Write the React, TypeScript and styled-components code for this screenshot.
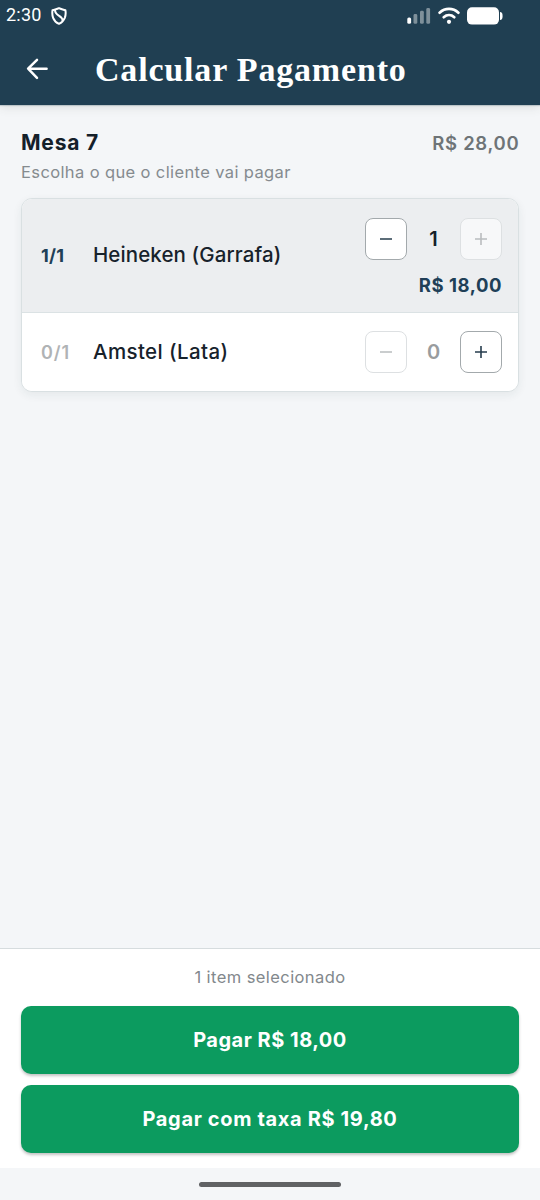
import React from "react";
import styled, { createGlobalStyle } from "styled-components";

const GlobalStyle = createGlobalStyle`
  * { box-sizing: border-box; }
  body { margin: 0; background: #f4f6f8; font-family: Inter, "Liberation Sans", sans-serif; }
  button { font: inherit; padding: 0; border: 0; }
`;

const Screen = styled.div`
  width: 540px;
  height: 1200px;
  display: flex;
  flex-direction: column;
  background: #f4f6f8;
  overflow: hidden;
`;

const TopBar = styled.header`
  height: 105px;
  flex: none;
  background: #203f52;
  color: #fff;
  box-shadow: 0 1px 1px rgba(32, 63, 82, 0.2), 0 2px 10px rgba(60, 60, 50, 0.13);
`;

const StatusBar = styled.div`
  height: 32px;
  padding: 0 37px 0 6px;
  display: flex;
  align-items: center;
  justify-content: space-between;
`;

const StatusGroup = styled.div`
  display: flex;
  align-items: center;
`;

const Clock = styled.span`
  font: 400 18px/30px Roboto, sans-serif;
  letter-spacing: 0.25px;
  padding-bottom: 2px;
  margin-right: 9px;
`;

const TitleRow = styled.div`
  height: 73px;
  display: flex;
  align-items: center;
  padding-left: 26px;
`;

const BackButton = styled.button`
  display: flex;
  width: 22px;
  height: 22px;
  margin-right: 47px;
  background: none;
  color: inherit;
`;

const Title = styled.h1`
  margin: 0;
  padding-top: 2px;
  font: 700 34px/44px "Liberation Serif", serif;
  letter-spacing: 0.82px;
  white-space: nowrap;
`;

const Content = styled.main`
  flex: 1;
  padding: 23px 21px 0;
`;

const Summary = styled.div`
  display: flex;
  justify-content: space-between;
  height: 30px;
  line-height: 30px;
  white-space: nowrap;
`;

const TableName = styled.h2`
  margin: 0;
  font-size: 21px;
  font-weight: 700;
  line-height: 30px;
  letter-spacing: 0.8px;
  color: #14202a;
`;

const Total = styled.span`
  font-size: 18.5px;
  font-weight: 600;
  line-height: 31px;
  letter-spacing: 0.7px;
  margin-right: -0.4px;
  color: #6e7477;
`;

const Hint = styled.p`
  margin: 0 0 10px;
  height: 31px;
  font-size: 16.5px;
  line-height: 29px;
  letter-spacing: 0.38px;
  color: #858b8f;
  white-space: nowrap;
`;

const Card = styled.section`
  margin-top: -1px;
  width: 498px;
  border: 1.5px solid #d9e0e2;
  border-radius: 11px;
  overflow: hidden;
  background: #fff;
  box-shadow: 0 3px 10px rgba(32, 50, 60, 0.07);
`;

const Row = styled.div<{ $selected?: boolean }>`
  display: flex;
  align-items: center;
  height: ${(p) => (p.$selected ? 114 : 78)}px;
  padding: 0 16px 0 19px;
  background: ${(p) => (p.$selected ? "#eceef0" : "#fff")};
  border-bottom: ${(p) => (p.$selected ? "1.5px solid #dbe2e4" : "0")};
`;

const Ratio = styled.span<{ $muted?: boolean }>`
  width: 52px;
  font-size: 18px;
  font-weight: ${(p) => (p.$muted ? 600 : 700)};
  letter-spacing: ${(p) => (p.$muted ? 0.9 : 0.3)}px;
  color: ${(p) => (p.$muted ? "#b0b3b5" : "#203f57")};
`;

const ItemName = styled.span<{ $spacing: number }>`
  flex: 1;
  padding-bottom: 2px;
  font-size: 20.5px;
  font-weight: 500;
  letter-spacing: ${(p) => p.$spacing}px;
  color: #17222b;
  white-space: nowrap;
`;

const Controls = styled.div`
  display: flex;
  flex-direction: column;
  align-items: flex-end;
`;

const Stepper = styled.div`
  display: flex;
  align-items: center;
`;

const StepButton = styled.button`
  width: 42px;
  height: 42px;
  display: flex;
  align-items: center;
  justify-content: center;
  border: 1px solid #a3a9ac;
  border-radius: 8px;
  background: #fff;
  color: #263c4d;
  &:disabled {
    border-color: #dde0e2;
    background: rgba(255, 255, 255, 0.6);
    color: #b9bcbe;
  }
`;

const Count = styled.span<{ $muted?: boolean }>`
  width: 53px;
  text-align: center;
  font-size: 20px;
  font-weight: 600;
  color: ${(p) => (p.$muted ? "#999c9e" : "#14202a")};
`;

const Price = styled.span`
  margin-top: 12px;
  margin-bottom: -4px;
  font-size: 18.5px;
  font-weight: 700;
  line-height: 26px;
  letter-spacing: 0.55px;
  color: #203f57;
  white-space: nowrap;
`;

const Footer = styled.footer`
  height: 220px;
  flex: none;
  padding: 0 21px;
  background: #fff;
  border-top: 1px solid #d6dcde;
`;

const Selected = styled.p`
  margin: 0;
  height: 57px;
  text-align: center;
  font-size: 16.5px;
  line-height: 57px;
  letter-spacing: 0.42px;
  color: #82888c;
`;

const PayButton = styled.button<{ $spacing: number }>`
  display: block;
  width: 498px;
  height: 68px;
  margin-bottom: 11px;
  border-radius: 10px;
  background: #0c9b5f;
  color: #fff;
  font-size: 20px;
  font-weight: 700;
  letter-spacing: ${(p) => p.$spacing}px;
  box-shadow: 0 2px 3px rgba(0, 0, 0, 0.24);
`;

const NavBar = styled.div`
  height: 32px;
  flex: none;
  display: flex;
  align-items: center;
  justify-content: center;
`;

const HomePill = styled.div`
  width: 142px;
  height: 5px;
  border-radius: 3px;
  background: #606264;
`;

const ShieldIcon = () => (
  <svg width="16" height="18" viewBox="0 0 16 18" fill="none" stroke="#fff" strokeWidth="2" strokeLinejoin="round">
    <path d="M8 1.2 C10 2.3 12.3 2.4 14.4 3.2 C14.9 6 14.7 8.5 13.8 10.8 C12.6 13.6 10.8 15.6 8 16.8 C5.2 15.6 3.2 13.6 2.1 10.8 C1.2 8.5 1.1 6 1.5 3.2 C3.7 2.4 6 2.3 8 1.2Z" />
    <path d="M4 3 C4 5.8 5.4 7.2 7.8 8.6 C10.4 10.1 11.6 11.6 11.6 14" />
  </svg>
);

const SignalIcon = () => (
  <svg width="24" height="18" viewBox="0 0 24 18" fill="#fff">
    <rect x="0.3" y="10.5" width="3.8" height="6.3" rx="1.6" />
    <g opacity="0.42">
      <rect x="6.5" y="7" width="3.8" height="9.8" rx="1.4" />
      <rect x="13" y="3.8" width="3.8" height="13" rx="1.4" />
      <rect x="19.3" y="1" width="3.8" height="15.8" rx="1.4" />
    </g>
  </svg>
);

const WifiIcon = () => (
  <svg width="22" height="18" viewBox="0 0 22 18" fill="none" stroke="#fff" strokeWidth="2.7" strokeLinecap="round">
    <path d="M1.6 5.7 C7 0.7 15 0.7 20.4 5.7" />
    <path d="M5.7 10.2 C8.8 7.4 13.2 7.4 16.3 10.2" />
    <circle cx="11" cy="14.8" r="2.1" fill="#fff" stroke="none" />
  </svg>
);

const BatteryIcon = () => (
  <svg width="36" height="18" viewBox="0 0 36 18" fill="#fff">
    <rect x="0" y="0.2" width="32" height="17.4" rx="5" />
    <path d="M33 5 C34.8 5 35.6 6.3 35.6 9 S34.8 13 33 13Z" />
  </svg>
);

const StatusIcons = styled(StatusGroup)`
  gap: 7px;
`;

const MinusIcon = () => (
  <svg width="14" height="14" viewBox="0 0 14 14" stroke="currentColor" strokeWidth="1.6">
    <path d="M1 7H13" />
  </svg>
);

const PlusIcon = () => (
  <svg width="14" height="14" viewBox="0 0 14 14" stroke="currentColor" strokeWidth="1.6">
    <path d="M1 7H13M7 1V13" />
  </svg>
);

const QuantityStepper = ({ count, max }: { count: number; max: number }) => (
  <Stepper>
    <StepButton disabled={count === 0} aria-label="Diminuir">
      <MinusIcon />
    </StepButton>
    <Count $muted={count === 0}>{count}</Count>
    <StepButton disabled={count === max} aria-label="Aumentar">
      <PlusIcon />
    </StepButton>
  </Stepper>
);

export default function App() {
  return (
    <Screen>
      <GlobalStyle />
      <TopBar>
        <StatusBar>
          <StatusGroup>
            <Clock>2:30</Clock>
            <ShieldIcon />
          </StatusGroup>
          <StatusIcons>
            <SignalIcon />
            <WifiIcon />
            <BatteryIcon />
          </StatusIcons>
        </StatusBar>
        <TitleRow>
          <BackButton aria-label="Voltar">
            <svg width="22" height="22" viewBox="0 0 22 22" fill="none" stroke="currentColor" strokeWidth="2.5" strokeLinecap="round" strokeLinejoin="round">
              <path d="M20.6 10.7H2.3M11 1.8L2.1 10.7L11 19.8" />
            </svg>
          </BackButton>
          <Title>Calcular Pagamento</Title>
        </TitleRow>
      </TopBar>
      <Content>
        <Summary>
          <TableName>Mesa 7</TableName>
          <Total>R$ 28,00</Total>
        </Summary>
        <Hint>Escolha o que o cliente vai pagar</Hint>
        <Card>
          <Row $selected>
            <Ratio>1/1</Ratio>
            <ItemName $spacing={0.1}>Heineken (Garrafa)</ItemName>
            <Controls>
              <QuantityStepper count={1} max={1} />
              <Price>R$ 18,00</Price>
            </Controls>
          </Row>
          <Row>
            <Ratio $muted>0/1</Ratio>
            <ItemName $spacing={0.38}>Amstel (Lata)</ItemName>
            <Controls>
              <QuantityStepper count={0} max={1} />
            </Controls>
          </Row>
        </Card>
      </Content>
      <Footer>
        <Selected>1 item selecionado</Selected>
        <PayButton $spacing={0.5}>Pagar R$ 18,00</PayButton>
        <PayButton $spacing={0.65}>Pagar com taxa R$ 19,80</PayButton>
      </Footer>
      <NavBar>
        <HomePill />
      </NavBar>
    </Screen>
  );
}
